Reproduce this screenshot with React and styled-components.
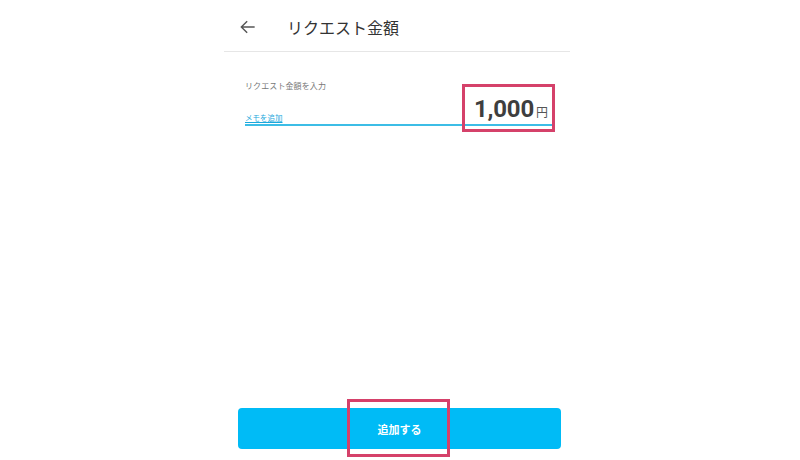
import React from "react";
import styled, { createGlobalStyle } from "styled-components";

const Global = createGlobalStyle`
	html, body {
		margin: 0;
		background: #fff;
		font-family: Roboto, "Noto Sans CJK JP", sans-serif;
	}
`;

const Screen = styled.div`
	display: flex;
	flex-direction: column;
	width: 346px;
	height: 460px;
	margin-left: 224px;
`;

const Header = styled.div`
	display: flex;
	align-items: center;
	height: 52px;
	padding: 3px 0 0 14px;
	border-bottom: 1px solid #e6e6e6;
	box-sizing: border-box;
`;

const Back = styled.button`
	display: flex;
	padding: 0;
	border: none;
	background: none;
	color: #555;
`;

const Title = styled.h1`
	margin: 0 0 0 29px;
	font-size: 16px;
	font-weight: 400;
	color: #333;
`;

const Form = styled.div`
	padding: 28px 17px 0 21px;
`;

const Label = styled.div`
	font-size: 8px;
	color: #777;
	letter-spacing: 0.1px;
`;

const Row = styled.div`
	display: flex;
	justify-content: space-between;
	align-items: flex-end;
	margin-top: 5px;
	border-bottom: 2px solid #3cbde6;
	height: 28px;
`;

const Memo = styled.a`
	font-size: 7.5px;
	color: #1aa8dc;
	text-decoration: underline;
	line-height: 10px;
`;

const Amount = styled.div`
	position: relative;
	display: flex;
	align-items: baseline;
	margin: 0 5px 3px 0;
	color: #3e3e3e;
`;

const Num = styled.span`
	font-size: 24px;
	line-height: 24px;
	font-weight: 700;
	letter-spacing: -0.2px;
`;

const Yen = styled.span`
	font-size: 12px;
	line-height: 12px;
	margin-left: 2px;
	color: #555;
`;

const Mark = styled.div`
	position: absolute;
	box-sizing: border-box;
	border: 3px solid #d5416a;
	top: ${p => p.$top}px;
	left: ${p => p.$left}px;
	width: ${p => p.$w}px;
	height: ${p => p.$h}px;
	pointer-events: none;
`;

const Spacer = styled.div`
	flex: 1;
`;

const Submit = styled.button`
	position: relative;
	height: 41px;
	margin: 0 9px 11px 14px;
	border: none;
	border-radius: 4px;
	background: #00bbf6;
	color: #fff;
	font-family: inherit;
	font-size: 11px;
	font-weight: 700;
`;

export default function App() {
	return (
		<>
			<Global />
			<Screen>
				<Header>
					<Back>
						<svg width="20" height="20" viewBox="0 0 24 24" fill="none" stroke="currentColor" strokeWidth="1.7">
							<path d="M20 12H4.5M11 5l-7 7 7 7" />
						</svg>
					</Back>
					<Title>リクエスト金額</Title>
				</Header>
				<Form>
					<Label>リクエスト金額を入力</Label>
					<Row>
						<Memo>メモを追加</Memo>
						<Amount>
							<Num>1,000</Num>
							<Yen>円</Yen>
							<Mark $top={-13} $left={-12} $w={93} $h={48} />
						</Amount>
					</Row>
				</Form>
				<Spacer />
				<Submit>
					追加する
					<Mark $top={-9} $left={109} $w={103} $h={58} />
				</Submit>
			</Screen>
		</>
	);
}
